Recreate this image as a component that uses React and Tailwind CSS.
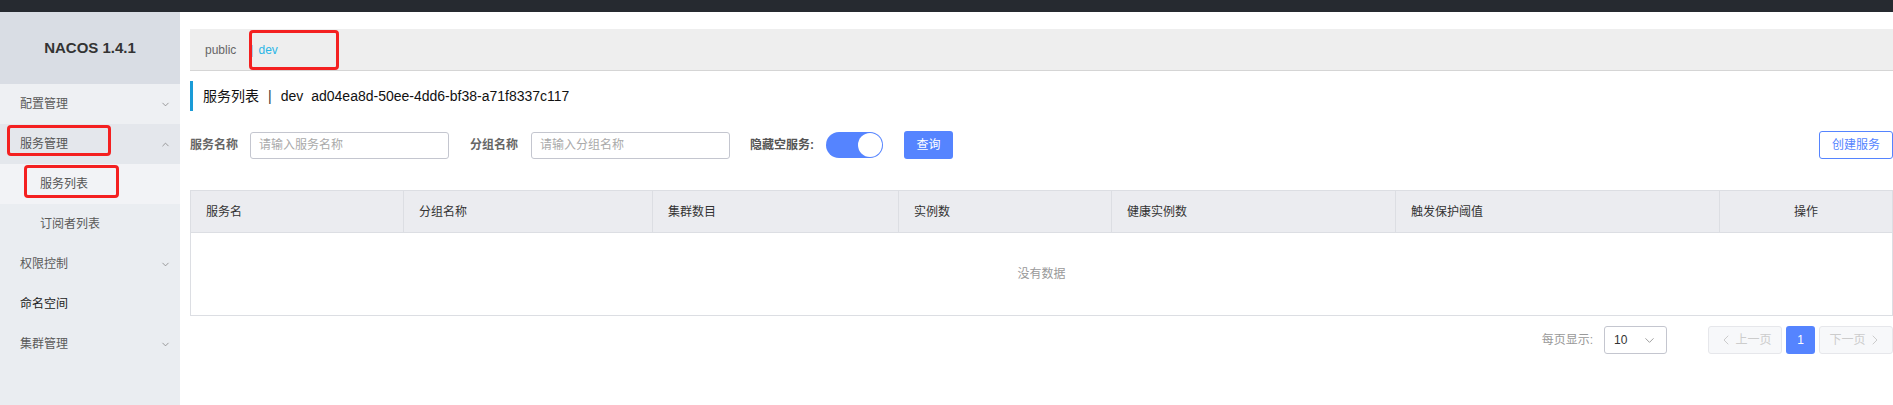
import { ChevronDown, ChevronUp, ChevronLeft, ChevronRight } from "lucide-react";

const font = { fontFamily: '"Liberation Sans", "Noto Sans CJK SC", sans-serif' };

const columns = [
  { title: "服务名", w: "w-[212px]" },
  { title: "分组名称", w: "w-[249px]" },
  { title: "集群数目", w: "w-[246px]" },
  { title: "实例数", w: "w-[213px]" },
  { title: "健康实例数", w: "w-[284px]" },
  { title: "触发保护阈值", w: "w-[324px]" },
  { title: "操作", w: "flex-1", center: true },
];

function MenuItem({ label, open, arrow, sub, className = "" }) {
  return (
    <div
      className={`h-10 flex items-center justify-between pr-[9px] text-[12px] ${sub ? "pl-[40px]" : "pl-[20px]"} ${className}`}
    >
      <span>{label}</span>
      {arrow &&
        (open ? (
          <ChevronUp className="w-[11px] h-[11px] text-[#888]" strokeWidth={1.8} />
        ) : (
          <ChevronDown className="w-[11px] h-[11px] text-[#888]" strokeWidth={1.8} />
        ))}
    </div>
  );
}

function Sidebar() {
  return (
    <div className="w-[180px] shrink-0 bg-[#eaedf1] text-[#5a5a5a]">
      <div className="h-[72px] bg-[#d9dde4] flex items-center justify-center text-[15px] font-bold text-[#333]">
        NACOS 1.4.1
      </div>
      <MenuItem label="配置管理" arrow className="bg-[#eef0f3]" />
      <MenuItem label="服务管理" arrow open className="bg-[#e4e7ec] text-[#555]" />
      <MenuItem label="服务列表" sub className="bg-[#f2f3f6] text-[#555]" />
      <MenuItem label="订阅者列表" sub />
      <MenuItem label="权限控制" arrow />
      <MenuItem label="命名空间" className="text-[#222]" />
      <MenuItem label="集群管理" arrow />
    </div>
  );
}

function Annotation({ className }) {
  return <div className={`absolute border-[3px] border-[#f42020] rounded-[4px] pointer-events-none ${className}`} />;
}

export default function App() {
  return (
    <div className="relative w-[1893px] h-[405px] overflow-hidden bg-white" style={font}>
      <div className="h-3 bg-[#262a30]" />
      <div className="flex h-[393px]">
        <Sidebar />
        <div className="flex-1 pl-[10px] pt-[17px]">
          {/* namespace tabs */}
          <div className="h-[42px] bg-[#eeeeee] border-b border-[#d5d5d5] flex items-center pl-[15px] text-[12px]">
            <span className="text-[#666]">public</span>
            <span className="ml-[14px] text-[#888]">|</span>
            <span className="ml-[5px] text-[#2bb6e6]">dev</span>
          </div>

          {/* title */}
          <div className="mt-[10px] h-[30px] border-l-[3px] border-[#1a9bd7] pl-[10px] flex items-center text-[14px] text-[#111]">
            <span>服务列表</span>
            <span className="mx-[9px] text-[#333]">|</span>
            <span>dev</span>
            <span className="ml-[8px]">ad04ea8d-50ee-4dd6-bf38-a71f8337c117</span>
          </div>

          {/* filters */}
          <div className="mt-[20px] flex items-center h-[28px] text-[12px]">
            <span className="font-bold text-[#666]">服务名称</span>
            <div className="ml-[12px] w-[199px] h-[27px] border border-[#c4c6cf] rounded-[3px] flex items-center pl-[8px] text-[#aaa]">
              请输入服务名称
            </div>
            <span className="ml-[21px] font-bold text-[#666]">分组名称</span>
            <div className="ml-[13px] w-[199px] h-[27px] border border-[#c4c6cf] rounded-[3px] flex items-center pl-[8px] text-[#aaa]">
              请输入分组名称
            </div>
            <span className="ml-[20px] font-bold text-[#555]">隐藏空服务:</span>
            <div className="ml-[12px] w-[57px] h-[26px] rounded-full bg-[#5584ff] flex items-center justify-end pr-[1px]">
              <div className="w-[24px] h-[24px] rounded-full bg-white" />
            </div>
            <div className="ml-[21px] w-[49px] h-[28px] rounded-[3px] bg-[#5584ff] text-white flex items-center justify-center">
              查询
            </div>
            <div className="ml-auto w-[74px] h-[28px] rounded-[3px] border border-[#5584ff] text-[#5584ff] flex items-center justify-center">
              创建服务
            </div>
          </div>

          {/* table */}
          <div className="mt-[31px] border border-[#dcdee3] text-[12px]">
            <div className="flex h-[42px] bg-[#ebecf0] border-b border-[#dcdee3] text-[#333]">
              {columns.map((c, i) => (
                <div
                  key={c.title}
                  className={`${c.w} h-full flex items-center ${c.center ? "justify-center" : "pl-[15px]"} ${i > 0 ? "border-l border-[#dcdee3]" : ""}`}
                >
                  {c.title}
                </div>
              ))}
            </div>
            <div className="h-[82px] flex items-center justify-center text-[#999]">没有数据</div>
          </div>

          {/* pagination */}
          <div className="mt-[10px] flex items-center justify-end h-[28px] text-[12px]">
            <span className="text-[#999]">每页显示:</span>
            <div className="ml-[11px] w-[63px] h-[28px] border border-[#c4c6cf] rounded-[3px] flex items-center justify-between pl-[9px] pr-[9px] text-[#333]">
              <span>10</span>
              <ChevronDown className="w-[15px] h-[15px] text-[#999]" strokeWidth={1.5} />
            </div>
            <div className="ml-[41px] w-[74px] h-[28px] border border-[#e6e7eb] bg-[#f7f8fa] rounded-[3px] flex items-center justify-center text-[#ccc]">
              <ChevronLeft className="w-[16px] h-[16px]" strokeWidth={1.5} />
              <span className="ml-[1px]">上一页</span>
            </div>
            <div className="ml-[4px] w-[29px] h-[28px] rounded-[3px] bg-[#5584ff] text-white flex items-center justify-center">1</div>
            <div className="ml-[4px] w-[74px] h-[28px] border border-[#e6e7eb] bg-[#f7f8fa] rounded-[3px] flex items-center justify-center text-[#ccc]">
              <span className="mr-[1px]">下一页</span>
              <ChevronRight className="w-[16px] h-[16px]" strokeWidth={1.5} />
            </div>
          </div>
        </div>
      </div>

      {/* red annotation boxes */}
      <Annotation className="left-[249px] top-[30px] w-[90px] h-[40px]" />
      <Annotation className="left-[7px] top-[125px] w-[104px] h-[31px]" />
      <Annotation className="left-[24px] top-[165px] w-[95px] h-[33px]" />
    </div>
  );
}
